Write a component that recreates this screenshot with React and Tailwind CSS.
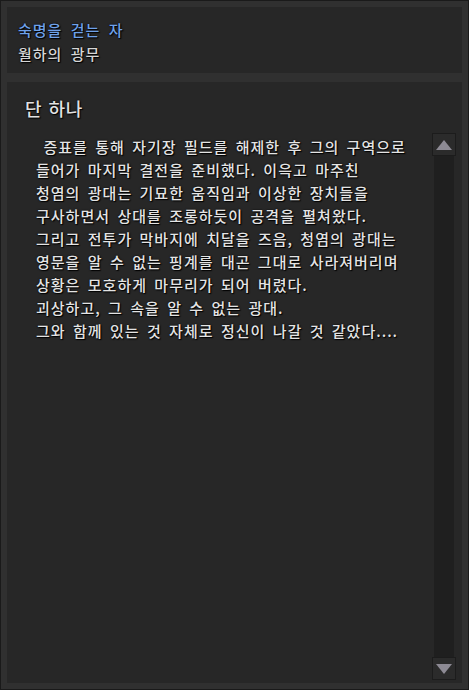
import React from "react";

const lines = [
  "\u00a0증표를 통해 자기장 필드를 해제한 후 그의 구역으로",
  "들어가 마지막 결전을 준비했다. 이윽고 마주친",
  "청염의 광대는 기묘한 움직임과 이상한 장치들을",
  "구사하면서 상대를 조롱하듯이 공격을 펼쳐왔다.",
  "그리고 전투가 막바지에 치달을 즈음, 청염의 광대는",
  "영문을 알 수 없는 핑계를 대곤 그대로 사라져버리며",
  "상황은 모호하게 마무리가 되어 버렸다.",
  "괴상하고, 그 속을 알 수 없는 광대.",
  "그와 함께 있는 것 자체로 정신이 나갈 것 같았다....",
];

function ScrollButton({ up }) {
  return (
    <div className="w-[24px] h-[23px] bg-[#2b2b2b] border border-[#1c1c1c] flex items-center justify-center">
      <svg width="16" height="10" viewBox="0 0 16 10">
        {up ? (
          <polygon points="8,0 16,10 0,10" fill="#8d8a94" />
        ) : (
          <polygon points="0,0 16,0 8,10" fill="#8d8a94" />
        )}
      </svg>
    </div>
  );
}

export default function App() {
  const shadow = "[text-shadow:1px_1px_1px_#000,0_0_2px_#000]";
  return (
    <div
      className="w-[469px] h-[690px] bg-[#303030] border border-[#1a1a1a] p-[6px] flex flex-col gap-[9px]"
      style={{ fontFamily: '"Noto Sans CJK KR", "Noto Sans", sans-serif' }}
    >
      {/* 상단 카드 */}
      <div className="h-[66px] shrink-0 bg-[#272727] pl-[11px] pt-[11px] flex flex-col">
        <div className={`text-[15px] leading-[24px] tracking-[1px] [word-spacing:4px] font-medium text-[#6fa2ea] ${shadow}`}>
          숙명을 걷는 자
        </div>
        <div className={`text-[15px] leading-[24px] tracking-[1px] [word-spacing:4px] font-medium text-[#d6d6d6] ${shadow}`}>
          월하의 광무
        </div>
      </div>

      {/* 본문 카드 */}
      <div className="flex-1 bg-[#272727] flex flex-col min-h-0">
        <div className={`pl-[18px] pt-[14px] text-[18px] leading-[24px] tracking-[0.5px] [word-spacing:2px] font-medium text-[#e2e2e2] ${shadow}`}>
          단 하나
        </div>
        <div className="flex-1 flex min-h-0 pt-[13px] pb-[3px] pr-[6px]">
          <div
            className={`flex-1 pl-[29px] pt-[2px] text-[15px] leading-[23px] tracking-[1px] [word-spacing:3px] font-medium text-[#e4e4e4] ${shadow}`}
          >
            {lines.map((l, i) => (
              <div key={i} className="whitespace-nowrap">
                {l}
              </div>
            ))}
          </div>
          <div className="w-[24px] flex flex-col items-center">
            <ScrollButton up />
            <div className="flex-1 w-[20px] bg-[#1f1f1f]" />
            <ScrollButton />
          </div>
        </div>
      </div>
    </div>
  );
}
